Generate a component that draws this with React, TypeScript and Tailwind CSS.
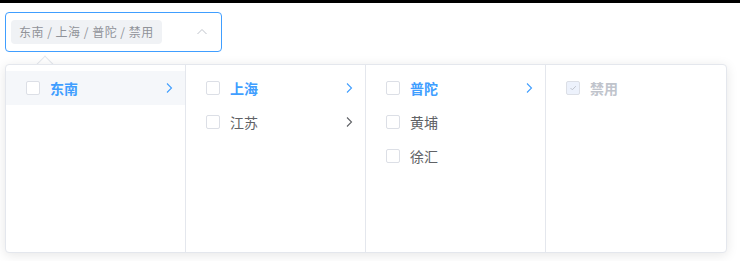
import { ReactNode } from "react";

type Item = {
  label: string;
  active?: boolean;
  hover?: boolean;
  hasChildren?: boolean;
  disabled?: boolean;
  checked?: boolean;
};

const columns: Item[][] = [
  [{ label: "东南", active: true, hover: true, hasChildren: true }],
  [
    { label: "上海", active: true, hasChildren: true },
    { label: "江苏", hasChildren: true },
  ],
  [
    { label: "普陀", active: true, hasChildren: true },
    { label: "黄埔" },
    { label: "徐汇" },
  ],
  [{ label: "禁用", active: true, disabled: true, checked: true }],
];

function Chevron({ className }: { className: string }) {
  return (
    <svg width="8" height="12" viewBox="0 0 8 12" className={className}>
      <path d="M2 1.5 L6.5 6 L2 10.5" fill="none" stroke="currentColor" strokeWidth="1.1" />
    </svg>
  );
}

function Checkbox({ disabled, checked }: { disabled?: boolean; checked?: boolean }) {
  return (
    <span
      className={`flex h-[14px] w-[14px] shrink-0 items-center justify-center rounded-[2px] border border-[#dcdfe6] ${
        disabled ? "bg-[#edf2fc]" : "bg-white"
      }`}
    >
      {checked && (
        <svg width="10" height="10" viewBox="0 0 10 10">
          <path d="M2.5 5 L4.3 6.8 L7.8 3.2" fill="none" stroke="#c0c4cc" strokeWidth="1" />
        </svg>
      )}
    </span>
  );
}

function Row({ item }: { item: Item }): ReactNode {
  const color = item.disabled
    ? "text-[#c0c4cc]"
    : item.active
    ? "text-[#409eff]"
    : "text-[#606266]";
  return (
    <li
      className={`flex h-[34px] items-center pl-[20px] pr-[12px] ${
        item.hover ? "bg-[#f5f7fa]" : ""
      }`}
    >
      <Checkbox disabled={item.disabled} checked={item.checked} />
      <span
        className={`ml-[10px] flex-1 text-[14px] ${color} ${
          item.active ? "font-bold" : ""
        }`}
      >
        {item.label}
      </span>
      {item.hasChildren && (
        <Chevron className={item.active ? "text-[#409eff]" : "text-[#606266]"} />
      )}
    </li>
  );
}

export default function App() {
  return (
    <div
      className="min-h-[261px] bg-white"
      style={{ fontFamily: '"Noto Sans CJK SC", "Noto Sans", sans-serif' }}
    >
      <div className="h-[3px] bg-black" />
      <div className="ml-[5px] mt-[9px] flex h-[40px] w-[217px] items-center rounded-[4px] border border-[#409eff] bg-white pl-[5px] pr-[10px]">
        <span className="flex h-[24px] items-center rounded-[4px] bg-[#f0f2f5] px-[8px] text-[12px] tracking-[0.5px] text-[#909399]">
          东南 / 上海 / 普陀 / 禁用
        </span>
        <span className="flex-1" />
        <svg width="14" height="14" viewBox="0 0 14 14" className="mr-[2px] text-[#c0c4cc]">
          <path d="M2.5 9 L7 4.5 L11.5 9" fill="none" stroke="currentColor" strokeWidth="1" />
        </svg>
      </div>
      <div className="relative ml-[5px] mt-[12px] w-[722px]">
        <div className="absolute left-[34px] top-[-6px] h-[12px] w-[12px] rotate-45 border-l border-t border-[#e4e7ed] bg-white" />
        <div className="relative flex overflow-hidden rounded-[4px] border border-[#e4e7ed] bg-white shadow-[0_2px_12px_rgba(0,0,0,0.1)]">
          {columns.map((col, i) => (
            <ul
              key={i}
              className={`h-[187px] w-[180px] py-[6px] ${
                i < columns.length - 1 ? "border-r border-[#e4e7ed]" : "flex-1"
              }`}
            >
              {col.map((item) => (
                <Row key={item.label} item={item} />
              ))}
            </ul>
          ))}
        </div>
      </div>
    </div>
  );
}
